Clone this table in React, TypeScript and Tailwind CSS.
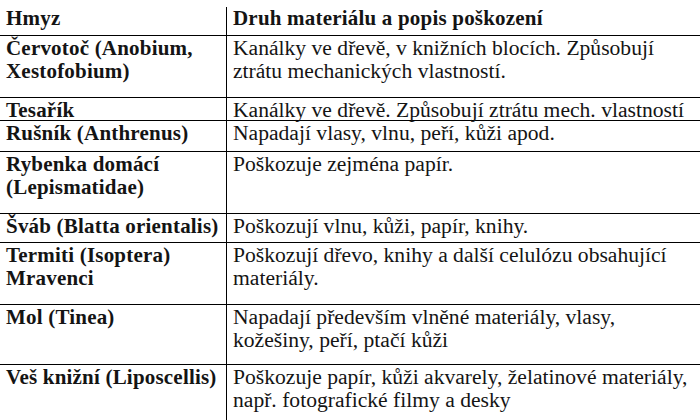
const rows = [
  { h: "h-[62px]", left: ["Červotoč (Anobium,", "Xestofobium)"], right: ["Kanálky ve dřevě, v knižních blocích. Způsobují", "ztrátu mechanických vlastností."] },
  { h: "h-[23px]", left: ["Tesařík"], right: ["Kanálky ve dřevě. Způsobují ztrátu mech. vlastností"] },
  { h: "h-[31px]", left: ["Rušník (Anthrenus)"], right: ["Napadají vlasy, vlnu, peří, kůži apod."] },
  { h: "h-[62px]", left: ["Rybenka domácí", "(Lepismatidae)"], right: ["Poškozuje zejména papír."] },
  { h: "h-[29px]", left: ["Šváb (Blatta orientalis)"], right: ["Poškozují vlnu, kůži, papír, knihy."] },
  { h: "h-[62px]", left: ["Termiti (Isoptera)", "Mravenci"], right: ["Poškozují dřevo, knihy a další celulózu obsahující", "materiály."] },
  { h: "h-[60px]", left: ["Mol (Tinea)"], right: ["Napadají především vlněné materiály, vlasy,", "kožešiny, peří, ptačí kůži"] },
  { h: "h-[56px]", left: ["Veš knižní (Liposcellis)"], right: ["Poškozuje papír, kůži akvarely, želatinové materiály,", "např. fotografické filmy a desky"], last: true },
];

export default function App() {
  return (
    <div className="w-[700px] h-[420px] overflow-hidden bg-white text-[#141414] font-['Liberation_Serif','Times_New_Roman',serif] text-[21.6px] leading-[23px]">
      {/* header */}
      <div className="flex h-[36px] border-b border-black">
        <div className="w-[227px] mt-[7px] border-r border-black pl-[6px] text-[21px] font-bold tracking-[0.2px]">Hmyz</div>
        <div className="flex-1 pt-[7px] pl-[6px] text-[21px] font-bold tracking-[0.2px]">Druh materiálu a popis poškození</div>
      </div>
      {rows.map((r, i) => (
        <div key={i} className={`flex ${r.h} ${r.last ? "" : "border-b border-black"}`}>
          <div className="w-[227px] shrink-0 border-r border-black pl-[6px] pt-[1px] text-[21px] font-bold tracking-[0.2px]">
            {r.left.map((t) => (
              <div key={t} className="whitespace-nowrap">{t}</div>
            ))}
          </div>
          <div className="flex-1 pl-[6px] pt-[1px]">
            {r.right.map((t) => (
              <div key={t} className="whitespace-nowrap">{t}</div>
            ))}
          </div>
        </div>
      ))}
    </div>
  );
}
